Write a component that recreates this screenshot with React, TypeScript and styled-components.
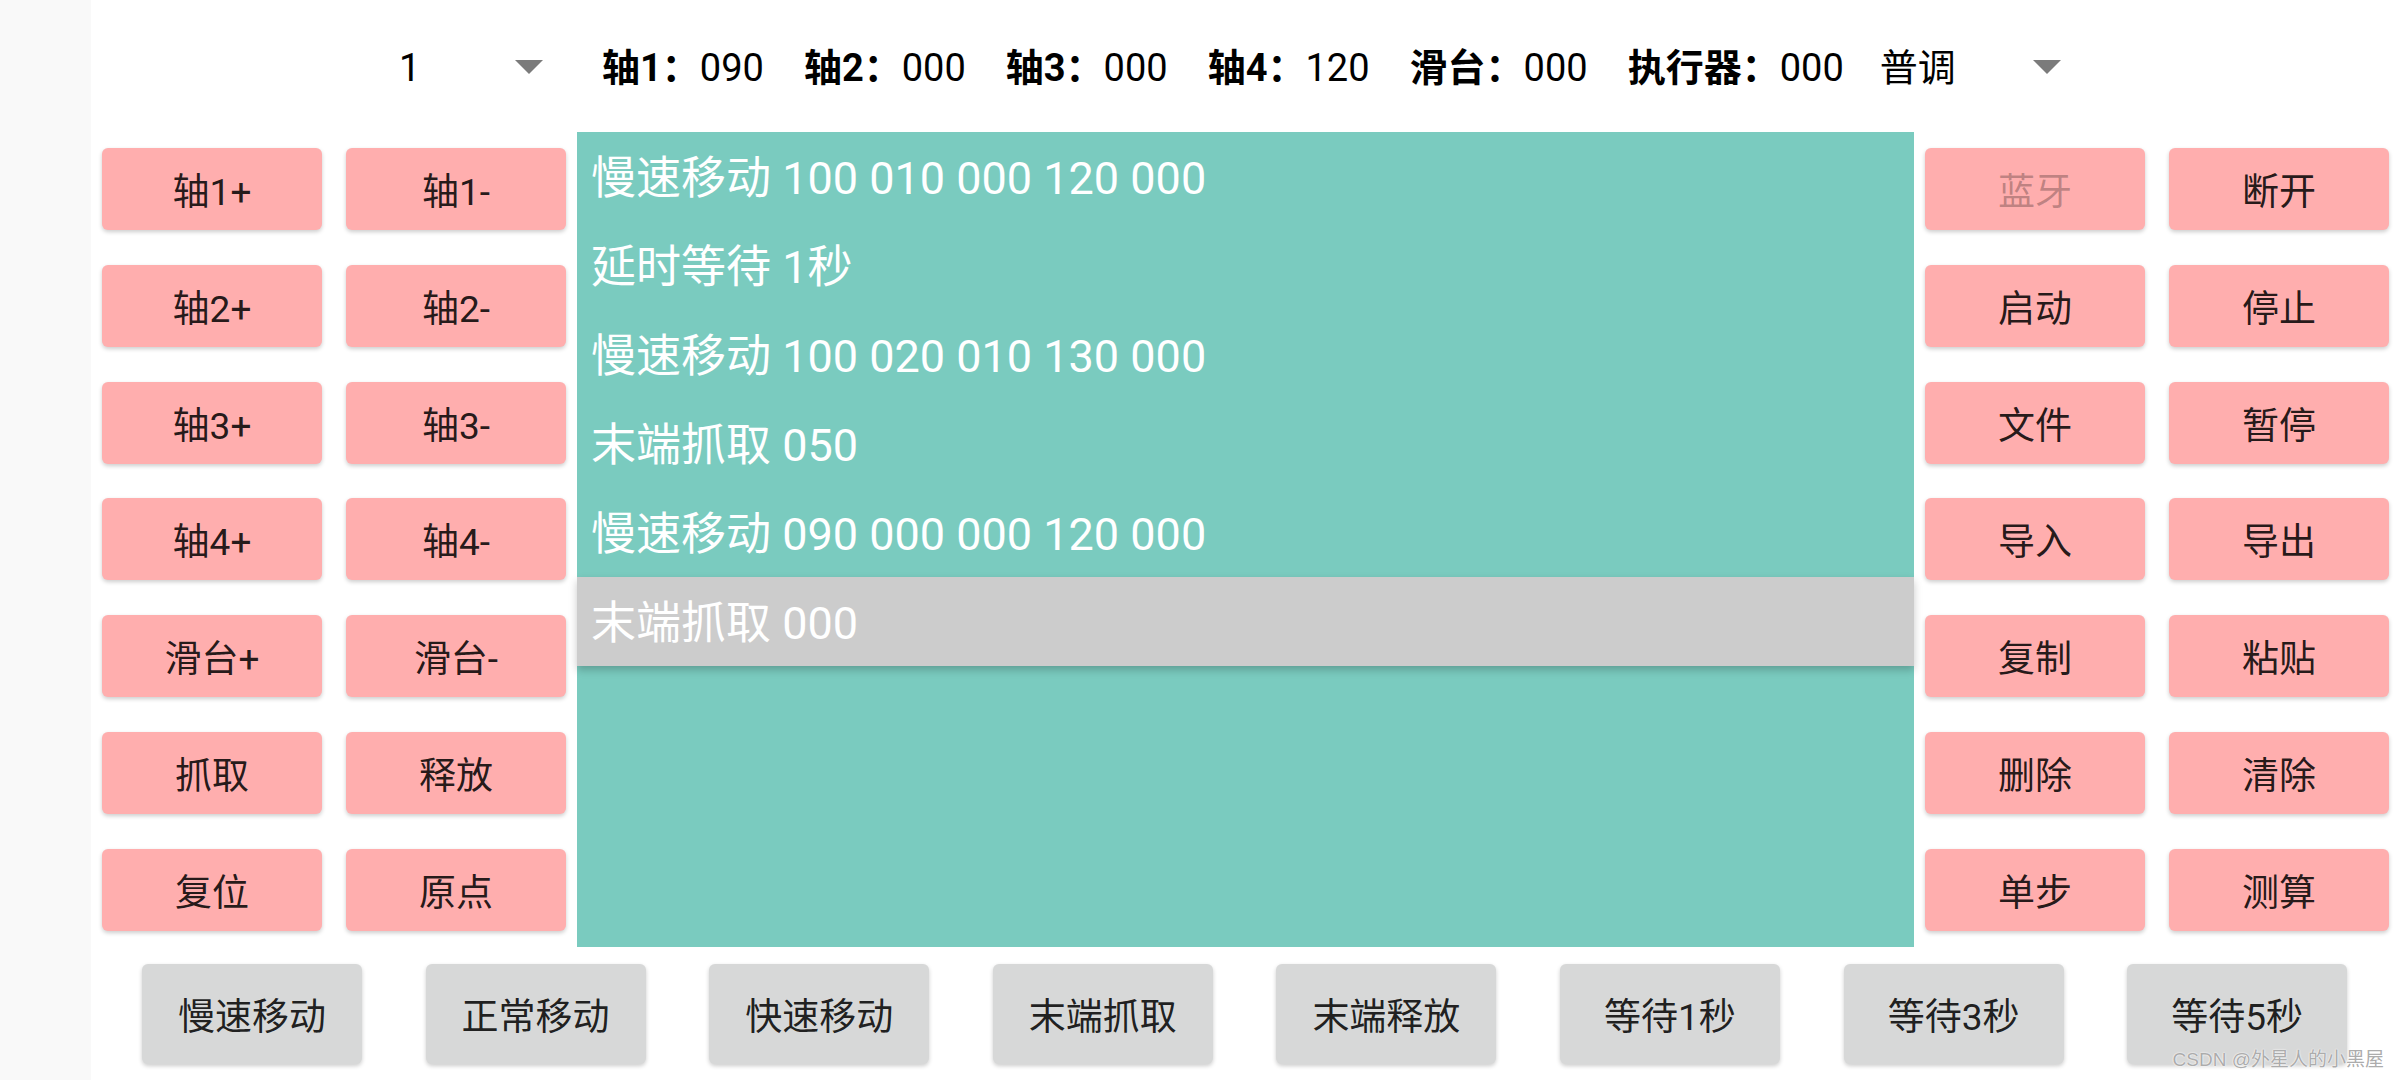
import React from 'react'
import styled, { createGlobalStyle } from 'styled-components'

const GlobalStyle = createGlobalStyle`
  html, body {
    margin: 0;
    padding: 0;
    background: #ffffff;
  }
  body {
    font-family: Roboto, "Noto Sans CJK SC", sans-serif;
  }
  * {
    box-sizing: border-box;
  }
`

type Field = {
  label: string,
  value: string
}

const fields: Field[] = [
  { label: '轴1：', value: '090' },
  { label: '轴2：', value: '000' },
  { label: '轴3：', value: '000' },
  { label: '轴4：', value: '120' },
  { label: '滑台：', value: '000' },
  { label: '执行器：', value: '000' }
]

const leftButtons = [
  '轴1+', '轴1-', '轴2+', '轴2-', '轴3+', '轴3-', '轴4+', '轴4-',
  '滑台+', '滑台-', '抓取', '释放', '复位', '原点'
]

const rightButtons = [
  '蓝牙', '断开', '启动', '停止', '文件', '暂停', '导入', '导出',
  '复制', '粘贴', '删除', '清除', '单步', '测算'
]

const program = [
  '慢速移动 100 010 000 120 000',
  '延时等待 1秒',
  '慢速移动 100 020 010 130 000',
  '末端抓取 050',
  '慢速移动 090 000 000 120 000',
  '末端抓取 000'
]

const actions = ['慢速移动', '正常移动', '快速移动', '末端抓取', '末端释放', '等待1秒', '等待3秒', '等待5秒']

const Arrow = () => (
  <ArrowSvg width="28" height="14" viewBox="0 0 28 14">
    <path d="M0 0 L28 0 L14 14 Z" fill="#7b7b7b" />
  </ArrowSvg>
)

export const App = () => {
  const selected = program.length - 1

  return (
    <Page>
      <GlobalStyle />
      <SideStrip />

      <Main>
        <TopBar>
          <Spinner $width={144}>
            <span>1</span>
            <Arrow />
          </Spinner>

          {fields.map((f, i) => (
            <FieldGroup key={f.label} $gap={i === 0 ? 59 : 40}>
              <Label>{f.label}</Label>
              <Value>{f.value}</Value>
            </FieldGroup>
          ))}

          <Spinner $width={181} $gap={36}>
            <span>普调</span>
            <Arrow />
          </Spinner>
        </TopBar>

        <Middle>
          <ButtonGrid $side="left">
            {leftButtons.map(b => (
              <PadButton key={b}>{b}</PadButton>
            ))}
          </ButtonGrid>

          <ProgramList>
            {program.map((line, i) => (
              <ProgramRow key={i} $selected={i === selected}>{line}</ProgramRow>
            ))}
          </ProgramList>

          <ButtonGrid $side="right">
            {rightButtons.map(b => (
              <PadButton key={b} $disabled={b === '蓝牙'}>{b}</PadButton>
            ))}
          </ButtonGrid>
        </Middle>

        <BottomBar>
          {actions.map(a => (
            <ActionButton key={a}>{a}</ActionButton>
          ))}
        </BottomBar>
      </Main>

      <Watermark>CSDN @外星人的小黑屋</Watermark>
    </Page>
  )
}

export default App

const Page = styled.div`
  position: relative;
  display: flex;
  width: 2400px;
  height: 1080px;
  overflow: hidden;
`

const SideStrip = styled.div`
  width: 91px;
  flex-shrink: 0;
  background: #f9f9f9;
`

const Main = styled.div`
  flex: 1;
  display: flex;
  flex-direction: column;
  background: #ffffff;
`

const TopBar = styled.div`
  height: 132px;
  flex-shrink: 0;
  display: flex;
  align-items: center;
  padding: 6px 0 0 308px;
  font-size: 38px;
  line-height: 1.2;
  color: #000000;
`

const Spinner = styled.div<{ $width: number, $gap?: number }>`
  display: flex;
  align-items: center;
  width: ${p => p.$width}px;
  margin-left: ${p => p.$gap || 0}px;
`

const ArrowSvg = styled.svg`
  margin-left: auto;
  margin-bottom: 4px;
`

const FieldGroup = styled.div<{ $gap: number }>`
  display: flex;
  align-items: baseline;
  margin-left: ${p => p.$gap}px;
`

const Label = styled.span`
  font-weight: 700;
`

const Value = styled.span`
  font-weight: 400;
`

const Middle = styled.div`
  display: flex;
  height: 815px;
  flex-shrink: 0;
`

const ButtonGrid = styled.div<{ $side: 'left' | 'right' }>`
  display: grid;
  grid-template-columns: repeat(2, 220px);
  grid-template-rows: repeat(7, 82px);
  column-gap: 24px;
  row-gap: 34.8px;
  padding-top: 16px;
  padding-left: ${p => p.$side === 'left' ? 11 : 0}px;
  padding-right: ${p => p.$side === 'right' ? 11 : 0}px;
`

const PadButton = styled.button<{ $disabled?: boolean }>`
  display: flex;
  align-items: center;
  justify-content: center;
  padding: 0;
  border: none;
  border-radius: 6px;
  background: #ffaeae;
  box-shadow: 0 2px 4px rgba(0, 0, 0, 0.2);
  font-family: Roboto, "Noto Sans CJK SC", sans-serif;
  font-size: 37px;
  color: ${p => p.$disabled ? 'rgba(0, 0, 0, 0.26)' : 'rgba(0, 0, 0, 0.87)'};
`

const ProgramList = styled.div`
  flex: 1;
  margin: 0 11px;
  display: flex;
  flex-direction: column;
  background: #7acbbf;
`

const ProgramRow = styled.div<{ $selected?: boolean }>`
  position: relative;
  height: 89px;
  flex-shrink: 0;
  display: flex;
  align-items: center;
  padding: 0 0 4px 14px;
  font-size: 45px;
  color: #ffffff;
  white-space: pre;
  background: ${p => p.$selected ? '#cccccc' : 'transparent'};
  box-shadow: ${p => p.$selected ? '0 4px 8px rgba(0, 0, 0, 0.22)' : 'none'};
`

const BottomBar = styled.div`
  flex: 1;
  display: flex;
  align-items: flex-start;
  gap: 63.6px;
  padding: 17px 0 0 51px;
`

const ActionButton = styled.button`
  width: 220px;
  height: 100px;
  flex-shrink: 0;
  padding: 0;
  border: none;
  border-radius: 6px;
  background: #d7d8d8;
  box-shadow: 0 2px 4px rgba(0, 0, 0, 0.2);
  font-family: Roboto, "Noto Sans CJK SC", sans-serif;
  font-size: 37px;
  color: rgba(0, 0, 0, 0.87);
`

const Watermark = styled.div`
  position: absolute;
  right: 16px;
  bottom: 9px;
  font-family: "Liberation Sans", "Noto Sans CJK SC", sans-serif;
  font-size: 19px;
  color: rgba(150, 150, 150, 0.8);
  text-shadow: 0 0 2px #ffffff, 0 0 1px #ffffff;
`
